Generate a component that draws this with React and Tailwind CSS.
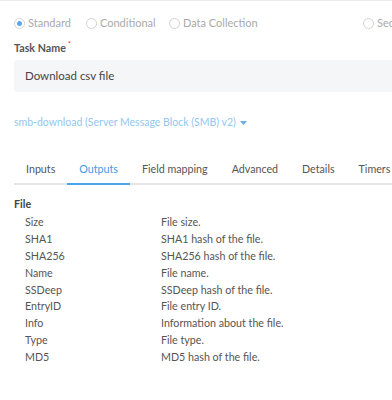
import React from "react";

const radios = [
  { label: "Standard", checked: true, w: "w-[72px]" },
  { label: "Conditional", checked: false, w: "w-[83px]" },
  { label: "Data Collection", checked: false, w: "w-[194px]" },
  { label: "Sec", checked: false, w: "w-[60px]" },
];

const tabs = ["Inputs", "Outputs", "Field mapping", "Advanced", "Details", "Timers"];

const outputs = [
  ["Size", "File size."],
  ["SHA1", "SHA1 hash of the file."],
  ["SHA256", "SHA256 hash of the file."],
  ["Name", "File name."],
  ["SSDeep", "SSDeep hash of the file."],
  ["EntryID", "File entry ID."],
  ["Info", "Information about the file."],
  ["Type", "File type."],
  ["MD5", "MD5 hash of the file."],
];

function Radio({ label, checked, w }) {
  return (
    <div className={`${w} flex items-center shrink-0`}>
      <span className="w-[11px] h-[11px] rounded-full border border-[#d4d4d4] flex items-center justify-center shrink-0">
        {checked && <span className="w-[5px] h-[5px] rounded-full bg-[#5aa9ec]" />}
      </span>
      <span className="ml-[3px] text-[#aaaaaa] whitespace-nowrap">{label}</span>
    </div>
  );
}

export default function App() {
  return (
    <div className="w-[392px] h-[400px] overflow-hidden bg-white border-t border-[#ececec] font-['Lato','Noto_Sans',sans-serif] text-[10.7px] text-[#555]">
      {/* Task type */}
      <div className="flex items-center pl-[14px] h-[22px] mt-[11px] text-[11px]">
        {radios.map((r) => (
          <Radio key={r.label} {...r} />
        ))}
      </div>

      {/* Task name */}
      <div className="pl-[14px] mt-[7px] flex items-start h-[14px]">
        <span className="font-bold text-[#555] leading-[14px]">Task Name</span>
        <span className="text-[#e53935] text-[8px] leading-[8px] ml-[2px] -mt-[1px]">*</span>
      </div>
      <div className="ml-[14px] mt-[5px] h-[32px] bg-[#f5f6f8] rounded-l-[3px] flex items-center pl-[11px] text-[11.5px] text-[#444]">
        Download csv file
      </div>

      {/* Integration */}
      <div className="pl-[14px] mt-[23px] flex items-center h-[16px] text-[#93c6ee] text-[10.5px]">
        <span>smb-download (Server Message Block (SMB) v2)</span>
        <svg width="7" height="4" viewBox="0 0 7 4" className="ml-[4px]">
          <path d="M0 0h7L3.5 4z" fill="#6aaee8" />
        </svg>
      </div>

      {/* Tabs */}
      <div className="ml-[14px] mt-[25px] flex border-b-2 border-[#e6e6e6] h-[29px]">
        {tabs.map((t) => (
          <div
            key={t}
            className={`px-[12px] flex items-center -mb-[2px] border-b-2 whitespace-nowrap ${
              t === "Outputs" ? "border-[#4da3e8] text-[#3d9be6]" : "border-transparent text-[#555]"
            }`}
          >
            {t}
          </div>
        ))}
      </div>

      {/* Outputs */}
      <div className="pl-[14px] mt-[11px]">
        <div className="font-bold leading-[16px] text-[#444]">File</div>
        <div className="mt-[2px]">
          {outputs.map(([k, d]) => (
            <div key={k} className="flex h-[16.8px] items-center">
              <span className="w-[147px] pl-[11px] shrink-0">{k}</span>
              <span>{d}</span>
            </div>
          ))}
        </div>
      </div>
    </div>
  );
}
